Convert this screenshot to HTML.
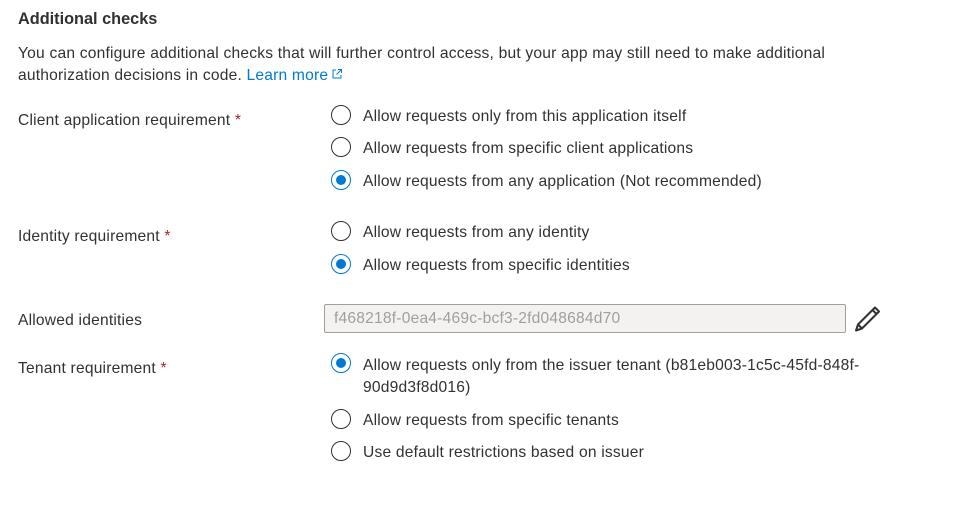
<!DOCTYPE html>
<html><head><meta charset="utf-8"><style>
body{margin:0;width:976px;height:521px;background:#fff;font-family:"Liberation Sans",sans-serif;color:#323130;font-size:15.6px;letter-spacing:0.2px;position:relative;overflow:hidden}
.a{position:absolute;white-space:nowrap;line-height:20px;margin-top:1px}
.r{position:absolute;width:18px;height:18px;border:1px solid #323130;border-radius:50%;box-sizing:content-box}
.r.on{border-color:#0078d4}
.r.on::after{content:"";position:absolute;left:4px;top:4px;width:10px;height:10px;border-radius:50%;background:#0078d4}
.s{color:#a4262c}
</style></head><body>
<div class="a" style="left:18px;top:8px;font-size:16.3px;letter-spacing:0;font-weight:bold;color:#323130">Additional checks</div>
<div class="a" style="left:18px;top:43px">You can configure additional checks that will further control access, but your app may still need to make additional</div>
<div class="a" style="left:18px;top:65px">authorization decisions in code. <span style="color:#0078d4">Learn more</span><svg width="12" height="12" viewBox="0 0 12 12" style="margin-left:3px"><path d="M5 2H2v8h8V7M7 1.5h3.5V5M10.5 1.5L5.5 6.5" fill="none" stroke="#0078d4" stroke-width="1"/></svg></div>

<div class="a" style="left:18px;top:110px">Client application requirement <span class="s">*</span></div>
<div class="r" style="left:331px;top:105px"></div><div class="a" style="left:363px;top:106px">Allow requests only from this application itself</div>
<div class="r" style="left:331px;top:137px"></div><div class="a" style="left:363px;top:138px">Allow requests from specific client applications</div>
<div class="r on" style="left:331px;top:170px"></div><div class="a" style="left:363px;top:171px">Allow requests from any application (Not recommended)</div>

<div class="a" style="left:18px;top:226px">Identity requirement <span class="s">*</span></div>
<div class="r" style="left:331px;top:221px"></div><div class="a" style="left:363px;top:222px">Allow requests from any identity</div>
<div class="r on" style="left:331px;top:254px"></div><div class="a" style="left:363px;top:255px">Allow requests from specific identities</div>

<div class="a" style="left:18px;top:310px">Allowed identities</div>
<div style="position:absolute;left:324px;top:304px;width:520px;height:27px;border:1px solid #a19f9d;border-radius:2px;background:#f3f2f1"></div>
<div class="a" style="left:334px;top:308px;color:#a19f9d">f468218f-0ea4-469c-bcf3-2fd048684d70</div>
<svg style="position:absolute;left:852px;top:304px" width="30" height="30" viewBox="0 0 30 30"><path d="M23 3.5l4 4L10 24.5l-6 2 2-6z M20.5 6l4 4 M6 20.5l4 4" fill="none" stroke="#323130" stroke-width="2" stroke-linejoin="round"/></svg>

<div class="a" style="left:18px;top:358px">Tenant requirement <span class="s">*</span></div>
<div class="r on" style="left:331px;top:353px"></div><div class="a" style="left:363px;top:355px">Allow requests only from the issuer tenant (b81eb003-1c5c-45fd-848f-</div>
<div class="a" style="left:363px;top:377px">90d9d3f8d016)</div>
<div class="r" style="left:331px;top:409px"></div><div class="a" style="left:363px;top:410px">Allow requests from specific tenants</div>
<div class="r" style="left:331px;top:441px"></div><div class="a" style="left:363px;top:442px">Use default restrictions based on issuer</div>
</body></html>
